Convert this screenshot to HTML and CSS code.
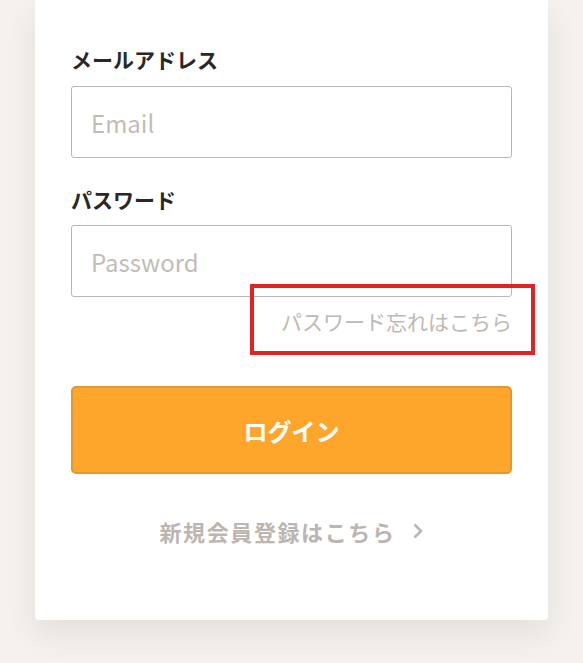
FILE: index.html
```html
<!DOCTYPE html>
<html lang="ja">
<head>
<meta charset="utf-8">
<link rel="stylesheet" href="styles.css">
</head>
<body>
<main class="page">
  <form class="card">
    <label class="label" for="email">メールアドレス</label>
    <input class="field" id="email" type="email" placeholder="Email">
    <label class="label label-second" for="pw">パスワード</label>
    <input class="field" id="pw" type="password" placeholder="Password">
    <div class="forgot-row">
      <a class="forgot" href="#">パスワード忘れはこちら</a>
      <span class="highlight"></span>
    </div>
    <button class="login" type="button">ログイン</button>
    <a class="register" href="#">新規会員登録はこちら<svg class="chev" width="12" height="18" viewBox="0 0 12 18"><path d="M2.5 2.5 L9 9 L2.5 15.5" fill="none" stroke="currentColor" stroke-width="2.6" stroke-linecap="butt"/></svg></a>
  </form>
</main>
</body>
</html>
```
FILE: styles.css
```css
html, body {
  margin: 0;
  padding: 0;
  background: #f4f1ee;
  height: 100%;
  overflow: hidden;
}
.page {
  display: flex;
  justify-content: center;
  font-family: "Noto Sans CJK JP", "Noto Sans", sans-serif;
}
.card {
  width: 441px;
  background: #fff;
  padding: 44px 36px 74px;
  border-radius: 0 0 4px 4px;
  box-shadow: 0 14px 30px rgba(120, 100, 90, 0.12);
  display: flex;
  flex-direction: column;
}
.label {
  font-size: 21px;
  font-weight: 700;
  line-height: 30px;
  color: #2b2724;
  margin-bottom: 12px;
}
.label-second {
  margin-top: 26px;
  margin-bottom: 11px;
}
.field {
  box-sizing: border-box;
  height: 72px;
  width: 100%;
  border: 1px solid #b9b6b3;
  border-radius: 3px;
  padding: 0 19px;
  font-family: "Noto Sans CJK JP", sans-serif;
  font-size: 24px;
  color: #333;
  outline: none;
  background: #fff;
}
.field::placeholder {
  color: #c2bcb7;
}
.forgot-row {
  position: relative;
  display: flex;
  justify-content: flex-end;
  margin-top: 9px;
}
.forgot {
  font-size: 21px;
  line-height: 30px;
  color: #bfb9b4;
  text-decoration: none;
}
.highlight {
  position: absolute;
  left: 179px;
  top: -22px;
  width: 277px;
  height: 63px;
  border: 4px solid #e02424;
  pointer-events: none;
}
.login {
  margin-top: 50px;
  height: 88px;
  width: 100%;
  background: #fea62c;
  border: 2px solid #e3972d;
  border-radius: 5px;
  color: #fff;
  font-family: "Noto Sans CJK JP", sans-serif;
  font-size: 24px;
  font-weight: 700;
}
.register {
  margin-top: 42px;
  align-self: center;
  display: flex;
  align-items: center;
  gap: 16px;
  font-size: 22px;
  font-weight: 700;
  line-height: 30px;
  letter-spacing: 1.6px;
  color: #bcb5b0;
  text-decoration: none;
}
.chev {
  display: block;
}
```
